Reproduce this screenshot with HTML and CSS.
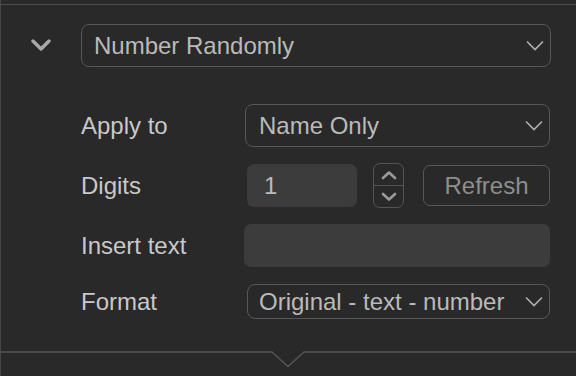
FILE: index.html
```html
<!DOCTYPE html>
<html lang="en">
<head>
    <meta charset="UTF-8">
    <meta name="viewport" content="width=device-width, initial-scale=1.0">
    <title>Rename Rule</title>
    <link rel="stylesheet" href="styles.css">
</head>
<body>
    <div class="panel">
        <div class="rule-header">
            <button class="collapse" type="button" aria-label="Collapse">
                <svg width="20" height="13" viewBox="0 0 20 13">
                    <polyline points="2,2 10,10 18,2" fill="none" stroke="#a9a9a9" stroke-width="3.4" stroke-linecap="round" stroke-linejoin="round"/>
                </svg>
            </button>
            <div class="select select-large">
                <span>Number Randomly</span>
                <svg class="caret" width="18" height="11" viewBox="0 0 18 11">
                    <polyline points="1,1.5 9,9.5 17,1.5" fill="none" stroke="#b0b0b0" stroke-width="1.6"/>
                </svg>
            </div>
        </div>

        <div class="fields">
            <label class="field-label">Apply to</label>
            <div class="select">
                <span>Name Only</span>
                <svg class="caret" width="18" height="11" viewBox="0 0 18 11">
                    <polyline points="1,1.5 9,9.5 17,1.5" fill="none" stroke="#b0b0b0" stroke-width="1.6"/>
                </svg>
            </div>

            <label class="field-label">Digits</label>
            <div class="digits">
                <div class="text-input digits-input">1</div>
                <div class="stepper">
                    <span class="step">
                        <svg width="16" height="10" viewBox="0 0 16 10">
                            <polyline points="2,8 8,2.5 14,8" fill="none" stroke="#9a9a9a" stroke-width="2.6" stroke-linecap="round" stroke-linejoin="round"/>
                        </svg>
                    </span>
                    <span class="step">
                        <svg width="16" height="10" viewBox="0 0 16 10">
                            <polyline points="2,2 8,7.5 14,2" fill="none" stroke="#9a9a9a" stroke-width="2.6" stroke-linecap="round" stroke-linejoin="round"/>
                        </svg>
                    </span>
                </div>
                <button class="refresh" type="button">Refresh</button>
            </div>

            <label class="field-label">Insert text</label>
            <div class="text-input wide-input"></div>

            <label class="field-label">Format</label>
            <div class="select select-small">
                <span>Original - text - number</span>
                <svg class="caret" width="18" height="11" viewBox="0 0 18 11">
                    <polyline points="1,1.5 9,9.5 17,1.5" fill="none" stroke="#b0b0b0" stroke-width="1.6"/>
                </svg>
            </div>
        </div>

        <div class="divider">
            <svg width="575" height="18" viewBox="0 0 575 18">
                <polyline points="0,1 271,1 287,15.5 303,1 575,1" fill="none" stroke="#555555" stroke-width="1.6"/>
            </svg>
        </div>
    </div>
</body>
</html>
```

FILE: styles.css
```css
body {
    margin: 0;
    background-color: #292929;
    font-family: "Liberation Sans", Arial, sans-serif;
    color: #c8c8c8;
}

.panel {
    height: 376px;
    box-sizing: border-box;
    padding-top: 4px;
    border-left: 1px solid #474747;
}

.rule-header {
    display: flex;
    align-items: center;
    padding: 19px 25px 0 30px;
    border-top: 1.5px solid #4e4e4e;
}

.collapse {
    display: flex;
    padding: 0;
    margin-right: 30px;
    background: none;
    border: none;
    cursor: pointer;
}

.select {
    display: flex;
    align-items: center;
    justify-content: space-between;
    box-sizing: border-box;
    height: 43px;
    padding: 0 6px 0 13px;
    border: 1.5px solid #575757;
    border-radius: 8px;
    font-size: 24px;
    color: #bababa;
}

.select-large {
    flex: 1;
    padding-left: 12px;
}

.select-small {
    height: 35px;
    margin-left: 2px;
    padding-left: 11px;
}

.fields {
    display: grid;
    grid-template-columns: 164px 305px;
    grid-template-rows: 43px 43px 43px 35px;
    row-gap: 17px;
    align-items: center;
    margin: 37px 0 0 80px;
}

.field-label {
    font-size: 24px;
    color: #c8c8c8;
}

.digits {
    display: flex;
    align-items: center;
}

.text-input {
    box-sizing: border-box;
    height: 43px;
    background-color: #3c3c3c;
    border-radius: 7px;
}

.digits-input {
    width: 110px;
    margin-left: 2px;
    padding-left: 17px;
    line-height: 43px;
    font-size: 24px;
    color: #bababa;
}

.wide-input {
    margin-left: -1px;
}

.stepper {
    display: flex;
    flex-direction: column;
    box-sizing: border-box;
    width: 31px;
    height: 45px;
    margin-left: 16px;
    border: 1.5px solid #545454;
    border-radius: 7px;
}

.step {
    display: flex;
    flex: 1;
    align-items: center;
    justify-content: center;
}

.step + .step {
    border-top: 1.5px solid #545454;
}

.refresh {
    flex: 1;
    height: 41px;
    margin-left: 19px;
    background: none;
    border: 1.5px solid #575757;
    border-radius: 7px;
    font-family: inherit;
    font-size: 24px;
    color: #8e8e8e;
    cursor: pointer;
}

.divider {
    display: flex;
    margin-top: 32px;
}
```
